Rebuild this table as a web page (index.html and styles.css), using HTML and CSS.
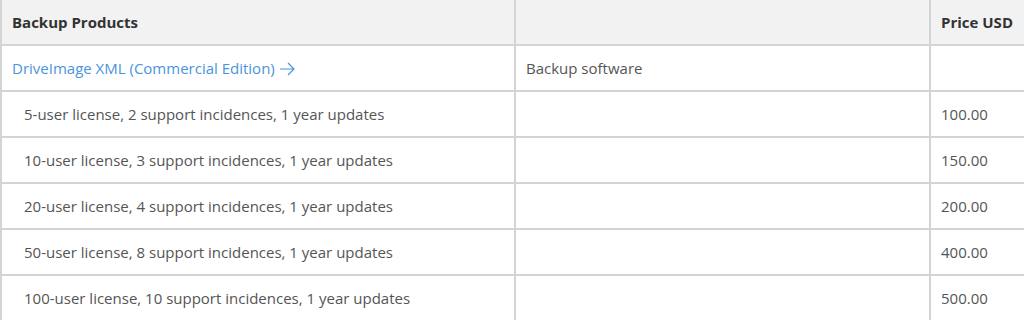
FILE: index.html
```html
<!DOCTYPE html>
<html lang="en">
<head>
  <meta charset="UTF-8" />
  <title>Backup Products</title>
  <link rel="stylesheet" href="styles.css">
</head>
<body>
  <div class="wrap">
    <table class="prices">
      <thead>
        <tr>
          <th class="col-name">Backup Products</th>
          <th class="col-desc"></th>
          <th class="col-price">Price USD</th>
        </tr>
      </thead>
      <tbody>
        <tr>
          <td><a href="#" class="product">DriveImage XML (Commercial Edition)<svg class="arrow" width="17" height="14" viewBox="0 0 17 14"><path d="M1 7h14M9 1l6 6-6 6" fill="none" stroke="currentColor" stroke-width="1.2"/></svg></a></td>
          <td>Backup software</td>
          <td></td>
        </tr>
        <tr>
          <td class="sub">5-user license, 2 support incidences, 1 year updates</td>
          <td></td>
          <td>100.00</td>
        </tr>
        <tr>
          <td class="sub">10-user license, 3 support incidences, 1 year updates</td>
          <td></td>
          <td>150.00</td>
        </tr>
        <tr>
          <td class="sub">20-user license, 4 support incidences, 1 year updates</td>
          <td></td>
          <td>200.00</td>
        </tr>
        <tr>
          <td class="sub">50-user license, 8 support incidences, 1 year updates</td>
          <td></td>
          <td>400.00</td>
        </tr>
        <tr>
          <td class="sub">100-user license, 10 support incidences, 1 year updates</td>
          <td></td>
          <td>500.00</td>
        </tr>
      </tbody>
    </table>
  </div>
</body>
</html>
```

FILE: styles.css
```css
* {
  margin: 0;
  padding: 0;
  box-sizing: border-box;
}

body {
  background: #fff;
  font-family: 'Open Sans', sans-serif;
  font-size: 15px;
  color: #555;
  overflow: hidden;
}

.wrap {
  width: 1060px;
}

.prices {
  width: 100%;
  border-collapse: collapse;
  table-layout: fixed;
}

.prices th,
.prices td {
  border: 2px solid #d4d4d4;
  padding: 12px 10px;
  line-height: 20px;
  height: 46px;
  text-align: left;
  vertical-align: middle;
}

.prices thead th {
  background: #f2f2f2;
  color: #333;
  font-weight: 700;
  border-top: none;
  height: 45px;
}

.col-name { width: 514px; }
.col-desc { width: 415px; }

.prices td.sub {
  padding-left: 22px;
}

.product {
  color: #4a94e0;
  text-decoration: none;
}

.arrow {
  vertical-align: -2px;
  margin-left: 4px;
}
```
